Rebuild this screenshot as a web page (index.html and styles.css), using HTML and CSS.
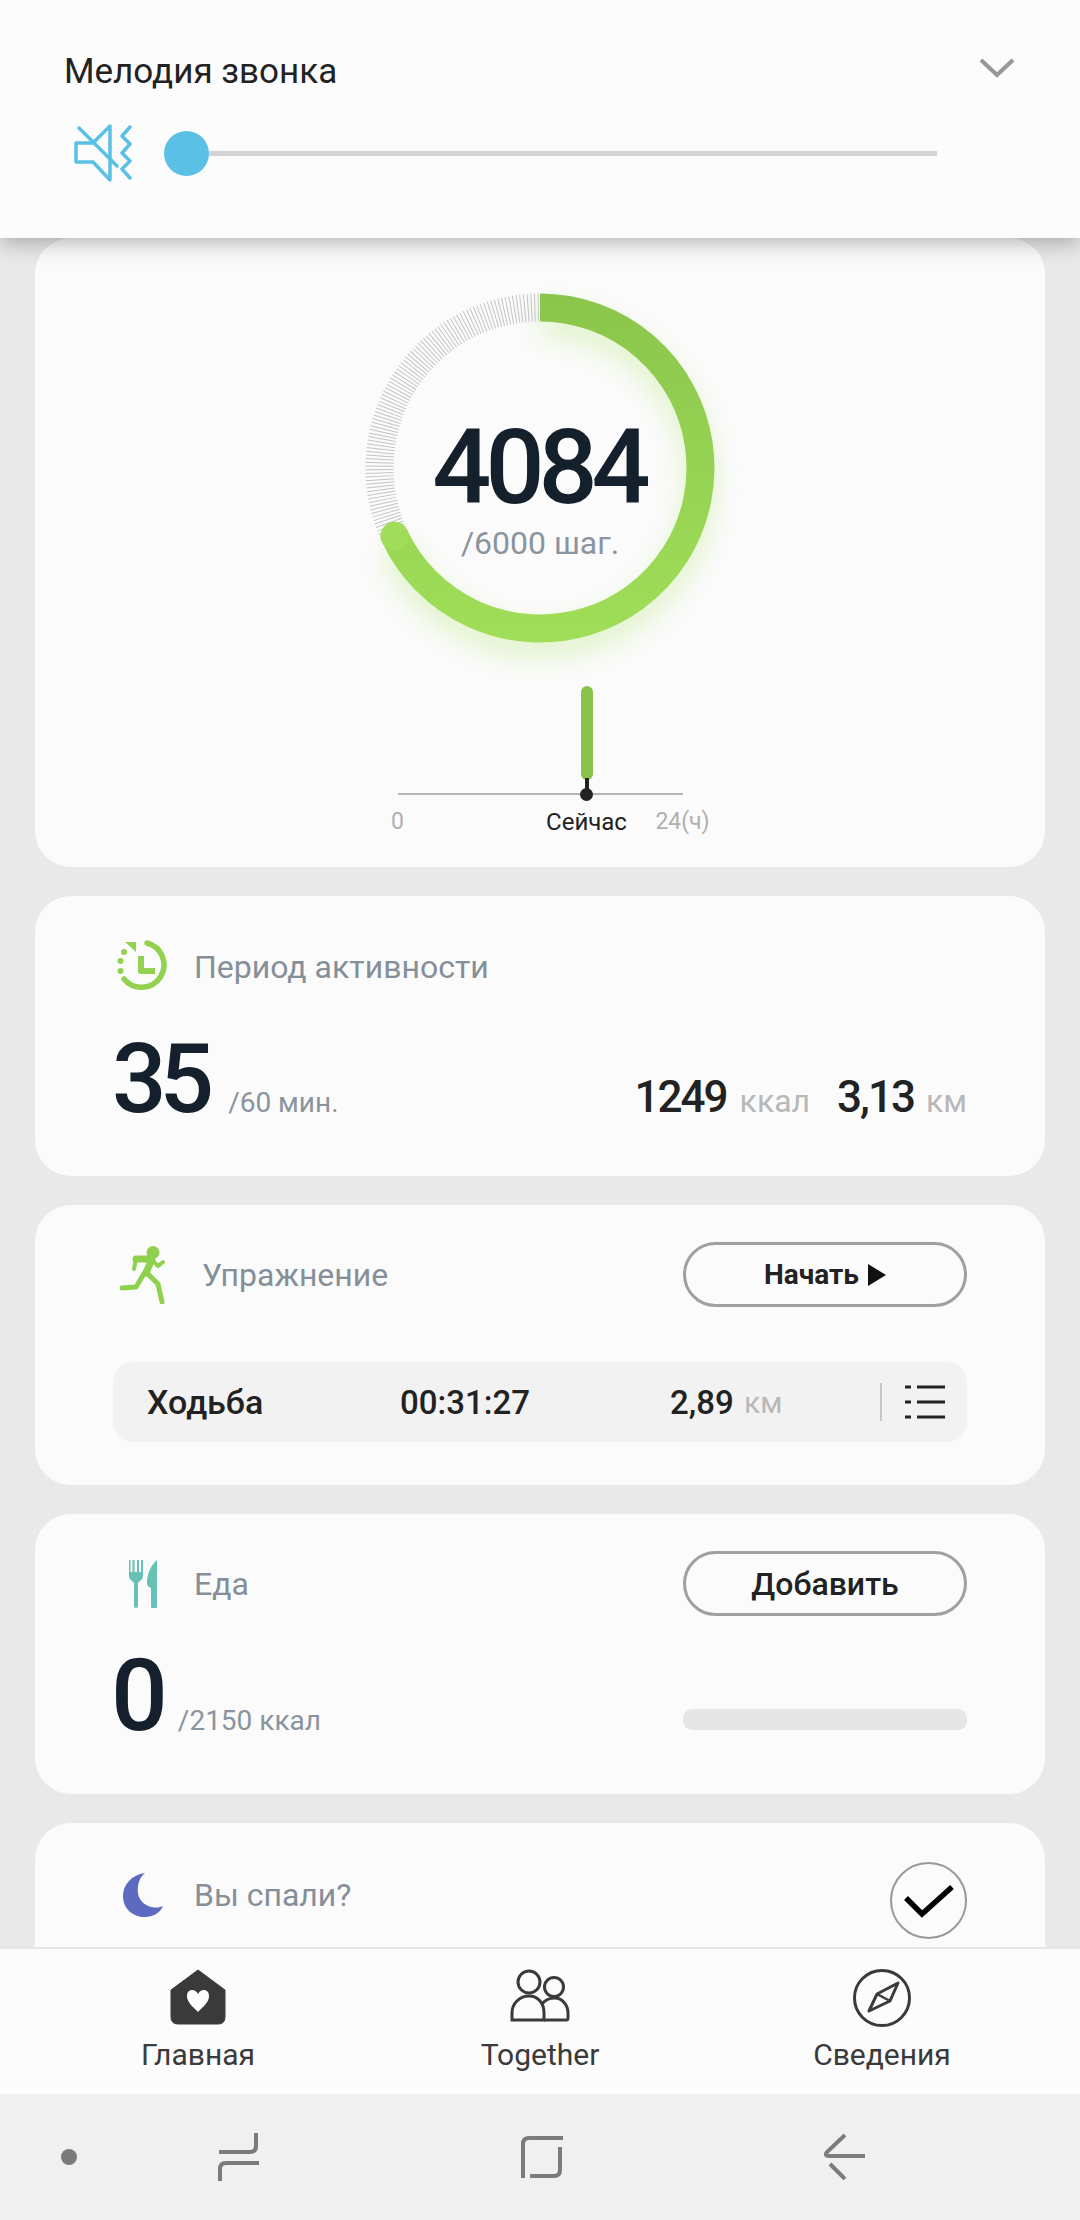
FILE: index.html
```html
<!DOCTYPE html>
<html lang="ru">
<head>
  <meta charset="UTF-8" />
  <meta name="viewport" content="width=device-width, initial-scale=1.0"/>
  <title>Samsung Health</title>
  <link rel="stylesheet" href="styles.css">
</head>
<body>
  <div class="screen">
    <header class="volume">
      <div class="volume-top">
        <h1 class="volume-title">Мелодия звонка</h1>
        <svg class="chevron" width="36" height="20" viewBox="0 0 36 20"><path d="M2 2 L18 17 L34 2" fill="none" stroke="#979797" stroke-width="4"/></svg>
      </div>
      <div class="volume-row">
        <svg class="mute-icon" width="58" height="60" viewBox="0 0 58 60">
          <g fill="none" stroke="#5ac0e6" stroke-width="3.5" stroke-linejoin="round" stroke-linecap="round">
            <path d="M2 20 H19 L36 3 V57 L19 39 H2 Z"/>
            <path d="M5 5 L43 43"/>
            <path d="M56 4 L48 13 L56 21 L48 30 L56 38 L48 46 L56 55"/>
          </g>
        </svg>
        <div class="slider">
          <span class="slider-thumb"></span>
          <span class="slider-track"></span>
        </div>
      </div>
    </header>

    <main class="feed">
      <section class="card card-steps">
        <div class="ring">
          <svg class="ring-svg" width="440" height="440" viewBox="0 0 440 440">
            <defs>
              <linearGradient id="ringGrad" gradientUnits="userSpaceOnUse" x1="220" y1="50" x2="220" y2="390">
                <stop offset="0" stop-color="#8bc64c"/>
                <stop offset="1" stop-color="#a0de59"/>
              </linearGradient>
              <filter id="ringGlow" x="-30%" y="-30%" width="160%" height="160%">
                <feGaussianBlur stdDeviation="14"/>
              </filter>
            </defs>
            <path class="ring-glow" d="M220 59.5 A160.5 160.5 0 1 1 74.5 287.8" filter="url(#ringGlow)"/>
            <path class="ring-rest" d="M74.5 287.8 A160.5 160.5 0 0 1 220 59.5"/>
            <path class="ring-done" d="M220 59.5 A160.5 160.5 0 1 1 74.5 287.8"/>
            <circle cx="74.5" cy="287.8" r="14" fill="#a0de59"/>
          </svg>
          <div class="ring-text">
            <div class="ring-value">4084</div>
            <div class="ring-goal">/6000 шаг.</div>
          </div>
        </div>
        <div class="timeline">
          <span class="timeline-bar"></span>
          <span class="timeline-stem"></span>
          <span class="timeline-axis"></span>
          <span class="timeline-dot"></span>
          <span class="timeline-label label-start">0</span>
          <span class="timeline-label label-now">Сейчас</span>
          <span class="timeline-label label-end">24(ч)</span>
        </div>
      </section>

      <section class="card">
        <div class="card-head card-head-active">
          <span class="icon-slot">
            <svg width="54" height="54" viewBox="0 0 54 54">
              <g fill="none" stroke="#93d250" stroke-linecap="round" stroke-linejoin="round">
                <path d="M30 3 A22.5 22.5 0 1 1 7 39" stroke-width="5.5"/>
                <path d="M24 16 V31 H38" stroke-width="6" stroke-linecap="butt"/>
              </g>
              <g fill="#93d250">
                <path d="M8 2 H19 V12 Z"/>
                <circle cx="7" cy="12" r="3"/>
                <circle cx="3.5" cy="21" r="3"/>
                <circle cx="3.5" cy="31" r="3"/>
              </g>
            </svg>
          </span>
          <span class="card-label">Период активности</span>
        </div>
        <div class="stat-row">
          <div class="stat-main">
            <span class="big-number big-active">35</span>
            <span class="goal">/60 мин.</span>
          </div>
          <div class="stat-side">
            <span class="mid-number">1249</span><span class="unit unit-kcal">ккал</span>
            <span class="mid-number mid-km">3,13</span><span class="unit">км</span>
          </div>
        </div>
      </section>

      <section class="card">
        <div class="card-head">
          <span class="icon-slot icon-slot-wide">
            <svg width="46" height="58" viewBox="0 0 46 58">
              <g fill="none" stroke="#8fd14f" stroke-linecap="round" stroke-linejoin="round">
                <path d="M16 13 H32 L26 27" stroke-width="7"/>
                <path d="M16 13 L14 23" stroke-width="4"/>
                <path d="M32 14 L38 20 L43 16" stroke-width="4"/>
                <path d="M25 26 L16 41 L2 42" stroke-width="5"/>
                <path d="M27 27 L38 38 L42 56" stroke-width="5"/>
              </g>
              <circle cx="33" cy="6.5" r="6.5" fill="#8fd14f"/>
            </svg>
          </span>
          <span class="card-label">Упражнение</span>
          <button class="pill">Начать<span class="play"></span></button>
        </div>
        <div class="workout">
          <span class="workout-name">Ходьба</span>
          <span class="workout-time">00:31:27</span>
          <span class="workout-dist">2,89</span>
          <span class="workout-unit">км</span>
          <span class="workout-divider"></span>
          <svg width="40" height="36" viewBox="0 0 40 36">
            <g stroke="#222" stroke-width="3">
              <path d="M0 3 H6 M12 3 H40 M0 18 H6 M12 18 H40 M0 33 H6 M12 33 H40"/>
            </g>
          </svg>
        </div>
      </section>

      <section class="card">
        <div class="card-head">
          <span class="icon-slot icon-slot-food">
            <svg width="28" height="48" viewBox="0 0 28 48">
              <g fill="#66c2b4">
                <path d="M0 0 H1.5 V12 H3.5 V0 H5.5 V12 H8 V0 H10 V12 H12 V0 H14 V16 C14 20 10 21 9 23 V46 A2 2 0 0 1 5 46 V23 C4 21 0 20 0 16 Z"/>
                <path d="M28 0 V46 A2.5 2.5 0 0 1 22 46 V28 C19 27 18 25 18 23 C18 14 22 5 28 0 Z"/>
              </g>
            </svg>
          </span>
          <span class="card-label">Еда</span>
          <button class="pill pill-add">Добавить</button>
        </div>
        <div class="stat-row stat-row-food">
          <div class="stat-main">
            <span class="big-number big-food">0</span>
            <span class="goal">/2150 ккал</span>
          </div>
          <span class="food-bar"></span>
        </div>
      </section>

      <section class="card">
        <div class="card-head card-head-sleep">
          <span class="icon-slot icon-slot-moon">
            <svg width="40" height="44" viewBox="0 0 40 44">
              <path d="M22 0 C8 2 0 12 0 23 C0 36 10 44 22 44 C30 44 37 40 40 33 C28 38 16 30 15 20 C14 11 17 4 22 0 Z" fill="#5c6bc0"/>
            </svg>
          </span>
          <span class="card-label">Вы спали?</span>
          <button class="check">
            <svg width="52" height="34" viewBox="0 0 52 34"><path d="M3 14 L19 30 L49 3" fill="none" stroke="#000" stroke-width="5.5"/></svg>
          </button>
        </div>
      </section>
    </main>

    <nav class="tabs">
      <div class="tab">
        <svg width="56" height="56" viewBox="0 0 56 56">
          <path d="M28 1 L55 21 V48 Q55 55 48 55 H8 Q1 55 1 48 V21 Z" fill="#3a3a3a" stroke="#3a3a3a" stroke-linejoin="round"/>
          <path d="M28 43 C22 37 17 33 17 27 C17 20 25 19 28 25 C31 19 39 20 39 27 C39 33 34 37 28 43 Z" fill="#fcfcfc"/>
        </svg>
        <span class="tab-label">Главная</span>
      </div>
      <div class="tab">
        <svg width="60" height="56" viewBox="0 0 60 56">
          <g fill="none" stroke="#3a3a3a" stroke-width="3">
            <circle cx="19" cy="13" r="11"/>
            <circle cx="44" cy="18" r="9.5"/>
            <path d="M2 51 V44 C2 34 10 27 19 27 C28 27 34 34 34 44 V51 Z"/>
            <path d="M32 35 C35 31 40 29 45 29 C52 29 58 36 58 44 V49 Q58 51 56 51 H34"/>
          </g>
        </svg>
        <span class="tab-label">Together</span>
      </div>
      <div class="tab">
        <svg width="58" height="58" viewBox="0 0 58 58">
          <g fill="none" stroke="#3a3a3a" stroke-linejoin="round">
            <circle cx="29" cy="29" r="27.5" stroke-width="3"/>
            <path d="M45 14 L37 32 L16 42 L24 25 Z" stroke-width="3"/>
            <path d="M24 25 L37 32" stroke-width="2.5"/>
          </g>
        </svg>
        <span class="tab-label">Сведения</span>
      </div>
    </nav>

    <footer class="softkeys">
      <span class="softkey-dot"></span>
      <svg class="softkey softkey-recent" width="42" height="48" viewBox="0 0 42 48">
        <path d="M38 0 V13 Q38 19 32 19 H1 M41 30 H8 Q2 30 2 36 V48" fill="none" stroke="#7b7b7b" stroke-width="4"/>
      </svg>
      <svg class="softkey softkey-home" width="42" height="44" viewBox="0 0 42 44">
        <path d="M42 3 H8 Q2 3 2 9 V43 M9 41 H33 Q39 41 39 35 V12" fill="none" stroke="#7b7b7b" stroke-width="4"/>
      </svg>
      <svg class="softkey softkey-back" width="42" height="46" viewBox="0 0 42 46">
        <path d="M21 1 L3 18 Q0 22 5 22 H41 M6 30 L21 45" fill="none" stroke="#7b7b7b" stroke-width="4"/>
      </svg>
    </footer>
  </div>
</body>
</html>
```

FILE: styles.css
```css
body {
  font-family: Roboto, 'Noto Sans', sans-serif;
  margin: 0;
  background: #e9e9e9;
}

.screen {
  width: 1080px;
  height: 2220px;
  display: flex;
  flex-direction: column;
  overflow: hidden;
}

/* volume panel */
.volume {
  height: 238px;
  box-sizing: border-box;
  flex-shrink: 0;
  padding: 50px 65px 0 64px;
  background: #fcfcfc;
  box-shadow: 0 4px 22px rgba(0, 0, 0, 0.3);
  position: relative;
  z-index: 2;
}

.volume-top {
  display: flex;
  justify-content: space-between;
  align-items: flex-start;
}

.volume-title {
  margin: 0;
  font-size: 35px;
  font-weight: 400;
  line-height: 44px;
  color: #222;
}

.chevron {
  margin-top: 8px;
}

.volume-row {
  display: flex;
  align-items: center;
  margin: 29px 0 0 10px;
}

.mute-icon {
  flex-shrink: 0;
}

.slider {
  display: flex;
  align-items: center;
  margin-left: 32px;
}

.slider-thumb {
  width: 45px;
  height: 45px;
  border-radius: 50%;
  background: #5ac0e6;
}

.slider-track {
  width: 728px;
  height: 5px;
  background: #d4d4d4;
}

/* cards */
.feed {
  flex: 1;
  min-height: 0;
  overflow: hidden;
  padding: 0 35px;
  display: flex;
  flex-direction: column;
  gap: 29px;
}

.card {
  flex-shrink: 0;
  height: 280px;
  box-sizing: border-box;
  padding: 37px 78px 0 80px;
  background: #fbfbfb;
  border-radius: 36px;
}

.card-steps {
  height: 629px;
  padding: 10px 0 0;
}

.card-head {
  display: flex;
  align-items: center;
  min-height: 65px;
}

.card-head-active {
  padding-top: 7px;
  min-height: 54px;
}

.card-head-sleep {
  min-height: 77px;
  padding-top: 2px;
}

.icon-slot {
  width: 79px;
  flex-shrink: 0;
  display: flex;
  align-items: center;
  padding-left: 2px;
  box-sizing: border-box;
}

.icon-slot-wide {
  width: 87px;
  padding-left: 5px;
}

.icon-slot-food {
  padding-left: 14px;
}

.icon-slot-moon {
  padding-left: 8px;
}

.card-label {
  font-size: 32px;
  color: #858f98;
  margin-right: auto;
}

.card-head-sleep .card-label,
.card-head-sleep .icon-slot {
  margin-top: -12px;
}

/* step ring */
.ring {
  position: relative;
  width: 440px;
  height: 440px;
  margin: 0 auto;
}

.ring-svg {
  overflow: visible;
  display: block;
}

.ring-svg path {
  fill: none;
  stroke-width: 28;
}

.ring-glow {
  stroke: #a5e05a;
  opacity: 0.32;
  transform: translateY(14px);
}

.ring-rest {
  stroke: #c4c4c4;
  stroke-dasharray: 1 2.4;
}

.ring-done {
  stroke: url(#ringGrad);
}

.ring-text {
  position: absolute;
  top: 165px;
  left: 0;
  right: 0;
  text-align: center;
}

.ring-value {
  font-size: 104px;
  font-weight: 500;
  line-height: 110px;
  letter-spacing: -6px;
  margin-left: -3px;
  color: #14202b;
}

.ring-goal {
  font-size: 32px;
  line-height: 40px;
  color: #8a949e;
}

/* timeline */
.timeline {
  position: relative;
  width: 285px;
  height: 170px;
  margin: -2px auto 0;
}

.timeline-bar {
  position: absolute;
  left: 183px;
  top: 0;
  width: 12px;
  height: 94px;
  border-radius: 6px;
  background: #8bc34a;
}

.timeline-stem {
  position: absolute;
  left: 187px;
  top: 92px;
  width: 4px;
  height: 16px;
  background: #222;
}

.timeline-axis {
  position: absolute;
  left: 0;
  right: 0;
  top: 107px;
  height: 2px;
  background: #b5b5b5;
}

.timeline-dot {
  position: absolute;
  left: 182.5px;
  top: 101.5px;
  width: 13px;
  height: 13px;
  border-radius: 50%;
  background: #222;
}

.timeline-label {
  position: absolute;
  top: 123px;
  font-size: 23px;
  line-height: 26px;
  color: #b0b0b0;
  transform: translateX(-50%);
}

.label-start {
  left: 0;
}

.label-now {
  left: 189px;
  font-size: 24px;
  color: #222;
}

.label-end {
  left: 285px;
}

/* number rows */
.stat-row {
  display: flex;
  justify-content: space-between;
  align-items: baseline;
  height: 100px;
  margin-top: 35px;
}

.stat-row-food {
  margin-top: 30px;
}

.stat-main {
  display: flex;
  align-items: baseline;
}

.big-number {
  font-size: 96px;
  font-weight: 500;
  line-height: 100px;
  color: #14202b;
}

.big-active {
  letter-spacing: -7px;
  margin-left: -3px;
  margin-right: 21px;
}

.big-food {
  font-size: 100px;
  margin-left: -4px;
  margin-right: 10px;
}

.goal {
  font-size: 28px;
  color: #8a949e;
}

.stat-side {
  display: flex;
  align-items: baseline;
}

.mid-number {
  font-size: 44px;
  font-weight: 500;
  letter-spacing: -2px;
  color: #222;
}

.mid-km {
  margin-left: 27px;
}

.unit {
  font-size: 32px;
  color: #b8b8b8;
  margin-left: 12px;
}

.unit-kcal {
  margin-left: 13px;
}

.food-bar {
  align-self: flex-end;
  width: 284px;
  height: 21px;
  margin-bottom: 16px;
  border-radius: 9px;
  background: #e6e6e6;
}

/* buttons */
.pill {
  width: 284px;
  height: 65px;
  box-sizing: border-box;
  border: 3px solid #a0a0a0;
  border-radius: 33px;
  background: none;
  padding: 0;
  font-family: inherit;
  font-size: 28px;
  font-weight: 700;
  color: #222;
  display: flex;
  align-items: center;
  justify-content: center;
}

.pill-add {
  font-weight: 500;
  font-size: 32px;
}

.play {
  width: 0;
  height: 0;
  margin-left: 9px;
  border-left: 18px solid #111;
  border-top: 11px solid transparent;
  border-bottom: 11px solid transparent;
}

.check {
  width: 77px;
  height: 77px;
  box-sizing: border-box;
  border: 2px solid #999;
  border-radius: 50%;
  background: none;
  padding: 0;
  display: flex;
  align-items: center;
  justify-content: center;
}

/* workout row */
.workout {
  display: flex;
  align-items: center;
  height: 80px;
  margin: 55px 0 0 -2px;
  padding: 0 22px 0 34px;
  background: #f2f2f2;
  border-radius: 20px;
  font-size: 33px;
  font-weight: 500;
  color: #222;
}

.workout-name {
  width: 253px;
  font-size: 34px;
}

.workout-time {
  width: 270px;
}

.workout-dist {
  width: 74px;
}

.workout-unit {
  font-weight: 400;
  font-size: 30px;
  color: #b8b8b8;
  margin-right: auto;
}

.workout-divider {
  width: 2px;
  height: 38px;
  background: #c8c8c8;
  margin-right: 23px;
}

/* tab bar */
.tabs {
  height: 147px;
  flex-shrink: 0;
  box-sizing: border-box;
  padding: 20px 27px 21px;
  border-top: 2px solid #e6e6e6;
  background: #fcfcfc;
  display: grid;
  grid-template-columns: repeat(3, 1fr);
  position: relative;
  z-index: 1;
}

.tab {
  display: flex;
  flex-direction: column;
  align-items: center;
}

.tab-label {
  font-size: 30px;
  line-height: 36px;
  margin-top: auto;
  color: #3a3a3a;
}

/* android keys */
.softkeys {
  height: 126px;
  flex-shrink: 0;
  background: #f0f0f0;
  display: flex;
  align-items: center;
  padding-left: 61px;
}

.softkey-dot {
  width: 16px;
  height: 16px;
  border-radius: 50%;
  background: #7b7b7b;
}

.softkey-recent {
  margin-left: 141px;
}

.softkey-home {
  margin-left: 261px;
}

.softkey-back {
  margin-left: 261px;
}
```
